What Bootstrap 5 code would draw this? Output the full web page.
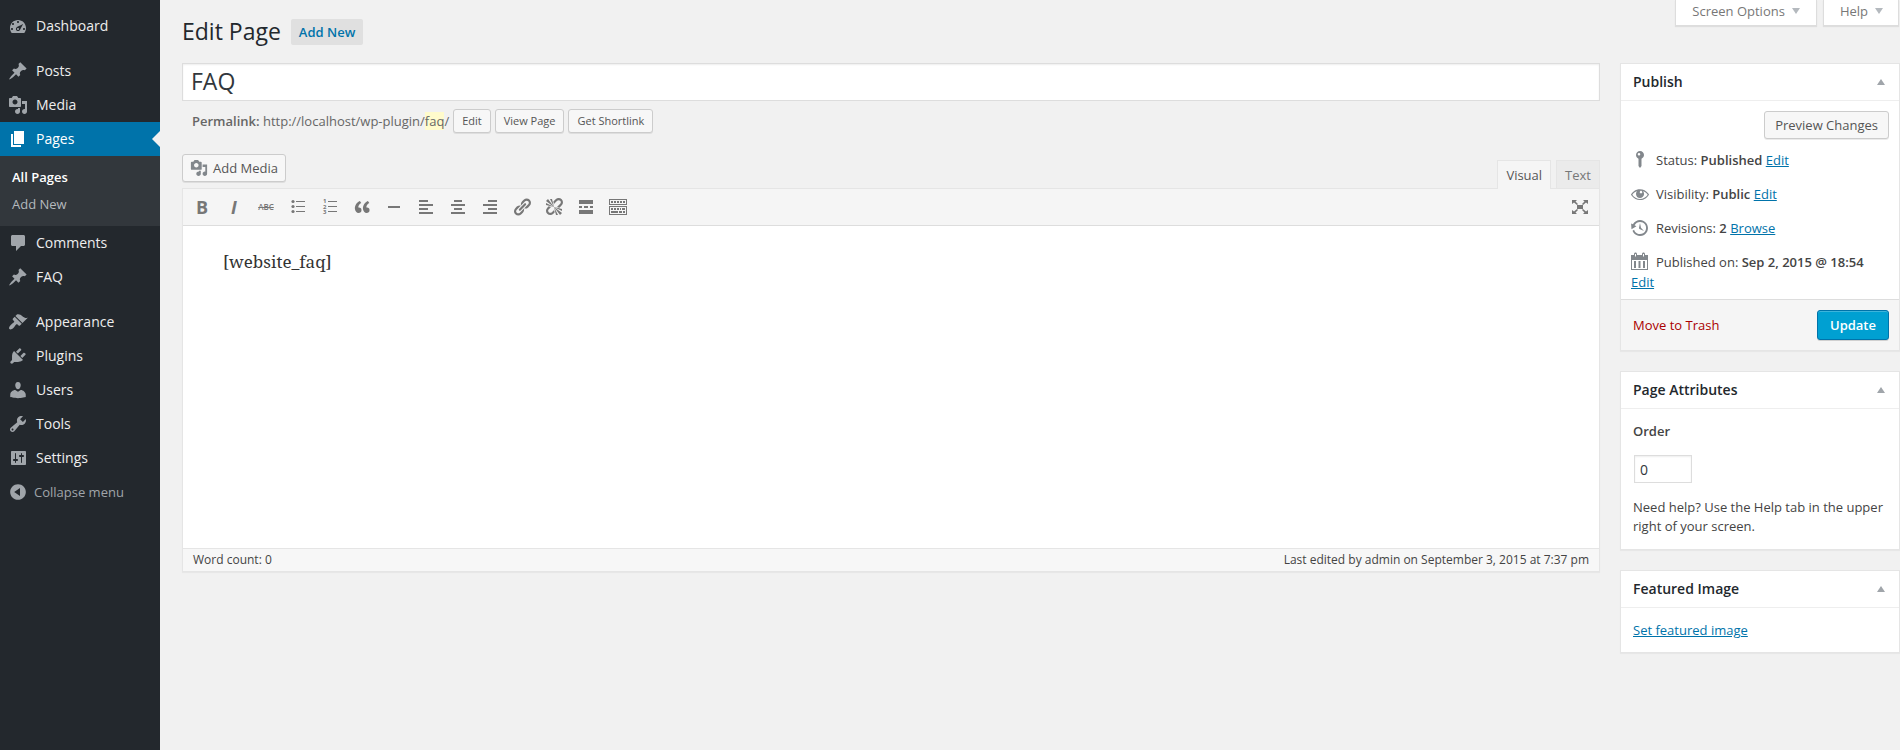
<!DOCTYPE html>
<html lang="en">
<head>
<meta charset="utf-8">
<meta name="viewport" content="width=device-width, initial-scale=1">
<title>Edit Page</title>
<link rel="stylesheet" href="https://cdn.jsdelivr.net/npm/bootstrap@5.3.0/dist/css/bootstrap.min.css">
<style>
  body { background: #f1f1f1; color: #444; font: 13px/18px "Open Sans", sans-serif; }
  svg { display: block; flex: none; fill: currentColor; }
  a { color: #0073aa; }
  strong { font-weight: 600; }

  /* admin menu */
  .admin-menu { width: 160px; background: #23282d; padding-top: 9px; flex: none; }
  .menu-link { height: 34px; padding-left: 8px; gap: 8px; color: #eee; font-size: 14px; text-decoration: none; position: relative; }
  .menu-link svg { color: #a0a5aa; }
  .menu-link.current { background: #0073aa; color: #fff; }
  .menu-link.current svg { color: #fff; }
  .menu-link.current::after { content: ""; position: absolute; right: 0; top: 9px; border: 8px solid transparent; border-right-color: #f1f1f1; border-left: 0; }
  .menu-gap { margin-top: 11px; }
  .submenu { background: #32373c; padding: 8px 0; }
  .submenu a { display: block; height: 27px; line-height: 27px; padding-left: 12px; color: #b4b9be; text-decoration: none; }
  .submenu a.current { color: #fff; font-weight: 600; }
  .collapse-btn { height: 34px; padding: 0 0 0 8px; gap: 6px; border: 0; background: none; color: #a0a5aa; }

  /* page */
  .content-area { padding-left: 22px; min-width: 0; }
  .top-bar { height: 63px; }
  h1 { font-size: 23px; line-height: 30px; font-weight: 400; color: #23282d; margin: 16px 0 0; }
  .add-new { margin: 19px 0 0 10px; height: 26px; line-height: 26px; padding: 0 8px; background: #e0e0e0; border-radius: 2px; font-weight: 600; text-decoration: none; }
  .screen-tabs { gap: 6px; padding-right: 1px; }
  .screen-tab { height: 26px; background: #fff; border: 1px solid #ddd; border-top: 0; box-shadow: 0 1px 1px rgba(0,0,0,.08); color: #777; padding: 0 16px 3px; gap: 7px; }
  .screen-tab.help-tab { padding-right: 15px; }
  .tri-down { border: 4px solid transparent; border-top: 6px solid #b4b9be; border-bottom: 0; }
  .tri-up { border: 4px solid transparent; border-bottom: 6px solid #a0a5aa; border-top: 0; }
  .columns { gap: 20px; }
  .main-col { min-width: 0; }
  .side-col { width: 280px; flex: none; }

  .title-input { display: block; width: 100%; height: 38px; border: 1px solid #ddd; background: #fff; box-shadow: inset 0 1px 2px rgba(0,0,0,.07); padding: 0 8px 2px; font-size: 23px; color: #32373c; }
  .permalink { color: #666; padding: 8px 0 21px 10px; gap: 4px; }
  .slug { background: #fffbcc; }
  .wp-btn { height: 28px; padding: 0 10px; background: #f7f7f7; border: 1px solid #ccc; border-radius: 3px; box-shadow: 0 1px 0 rgba(0,0,0,.08); color: #555; font-size: 13px; }
  .wp-btn.small-btn { height: 24px; padding: 0 8px; font-size: 11px; line-height: 20px; }
  .wp-btn.media-btn { padding: 0 7px; gap: 5px; }
  .media-btn svg { color: #82878c; }

  /* editor */
  .ed-tabs { gap: 5px; padding-top: 6px; }
  .ed-tab { height: 28px; border: 1px solid #e5e5e5; border-bottom: 0; background: #ebebeb; color: #777; padding: 0 8px; }
  .ed-tab.active { height: 29px; margin-bottom: -1px; background: #f5f5f5; color: #555; position: relative; }
  .editor { border: 1px solid #e5e5e5; box-shadow: 0 1px 1px rgba(0,0,0,.04); background: #fff; }
  .toolbar { height: 37px; background: #f5f5f5; border-bottom: 1px solid #ddd; padding: 0 5px; gap: 4px; }
  .tool { width: 28px; height: 28px; border: 0; background: none; padding: 0; color: #777; display: flex; align-items: center; justify-content: center; }
  .tool-text { font-size: 18px; font-weight: 700; line-height: 20px; }
  .tool-strike { font-size: 8px; font-weight: 600; text-decoration: line-through; }
  .ed-body { display: block; width: 100%; height: 322px; border: 0; resize: none; padding: 24px 40px; font: 17px/24px "Noto Serif", "Droid Serif", "DejaVu Serif", serif; color: #333; }
  .status-bar { height: 23px; background: #f7f7f7; border-top: 1px solid #e5e5e5; padding: 0 10px; font-size: 12px; }

  /* side boxes */
  .side-box { background: #fff; border: 1px solid #e5e5e5; box-shadow: 0 1px 1px rgba(0,0,0,.04); margin-bottom: 20px; }
  .side-head { height: 37px; border-bottom: 1px solid #eee; padding: 0 14px 0 12px; }
  .side-head h2 { font-size: 14px; line-height: 20px; font-weight: 600; color: #23282d; margin: 0; }
  .side-body { padding: 13px 12px; }
  .toggle-btn { border: 0; background: none; padding: 0; }
  .preview-row { padding: 10px 10px 4px; }
  .misc { line-height: 20px; padding: 7px 10px; }
  .misc svg { display: inline-block; vertical-align: top; color: #82878c; margin: 0 6px 0 -1px; }
  .box-foot { background: #f5f5f5; border-top: 1px solid #ddd; padding: 10px 10px 10px 12px; }
  .trash { color: #a00; text-decoration: none; }
  .update-btn { height: 30px; padding: 0 12px; background: #00a0d2; border: 1px solid #0073aa; border-radius: 3px; box-shadow: inset 0 1px 0 rgba(120,200,230,.5), 0 1px 0 rgba(0,0,0,.15); color: #fff; font-weight: 600; }
  .order-input { display: block; width: 58px; height: 28px; margin: 15px 1px; border: 1px solid #ddd; box-shadow: inset 0 1px 2px rgba(0,0,0,.07); padding: 0 5px; font-size: 14px; color: #32373c; }
  .help-text { line-height: 19px; margin: 0; }
</style>
</head>
<body>
<div class="d-flex min-vh-100">

  <nav class="admin-menu" aria-label="Main menu">
    <a class="menu-link d-flex align-items-center" href="#"><svg width="20" height="20" viewBox="0 0 20 20"><path fill-rule="evenodd" d="M3.76 17h12.48C17.34 15.63 18 13.89 18 12c0-4.41-3.58-8-8-8s-8 3.59-8 8c0 1.89.66 3.63 1.76 5zM9 6c0-.55.45-1 1-1s1 .45 1 1c0 .56-.45 1-1 1s-1-.44-1-1zM4 8c0-.55.45-1 1-1s1 .45 1 1c0 .56-.45 1-1 1s-1-.44-1-1zm4.52 3.4c.84-.83 6.51-3.5 6.51-3.5s-2.66 5.68-3.49 6.51c-.84.84-2.18.84-3.02 0-.83-.83-.83-2.18 0-3.01zM3 13c0-.55.45-1 1-1s1 .45 1 1c0 .56-.45 1-1 1s-1-.44-1-1zm6 0c0 .55.45 1 1 1s1-.45 1-1c0-.56-.45-1-1-1s-1 .44-1 1zm6 0c0-.55.45-1 1-1s1 .45 1 1c0 .56-.45 1-1 1s-1-.44-1-1z"/></svg>Dashboard</a>
    <a class="menu-link menu-gap d-flex align-items-center" href="#"><svg width="20" height="20" viewBox="0 0 20 20"><path d="M10.44 3.02l1.82-1.82 6.36 6.35-1.83 1.82c-1.05-.68-2.48-.57-3.41.36l-.75.75c-.92.93-1.04 2.35-.35 3.41l-1.83 1.82-2.41-2.41-2.8 2.79c-.42.42-3.38 2.71-3.8 2.29s1.86-3.39 2.28-3.81l2.79-2.79L4.1 9.36l1.83-1.82c1.05.69 2.48.57 3.4-.36l.75-.75c.93-.92 1.05-2.35.36-3.41z"/></svg>Posts</a>
    <a class="menu-link d-flex align-items-center" href="#"><svg width="20" height="20" viewBox="0 0 20 20"><path d="M13 11V4c0-.55-.45-1-1-1h-1.67L9 1H5L3.67 3H2c-.55 0-1 .45-1 1v7c0 .55.45 1 1 1h10c.55 0 1-.45 1-1zM7 4.5c1.38 0 2.5 1.12 2.5 2.5S8.38 9.5 7 9.5 4.5 8.38 4.5 7 5.62 4.5 7 4.5zM14 6h5v10.5c0 1.38-1.12 2.5-2.5 2.5S14 17.88 14 16.5s1.12-2.5 2.5-2.5c.17 0 .34.02.5.05V9h-3V6zm-4 8.05V13h2v3.5c0 1.38-1.12 2.5-2.5 2.5S7 17.88 7 16.5 8.12 14 9.5 14c.17 0 .34.02.5.05z" fill-rule="evenodd"/></svg>Media</a>
    <a class="menu-link current d-flex align-items-center" href="#" aria-current="page"><svg width="20" height="20" viewBox="0 0 20 20"><path d="M6 15V2h10v13H6zm-1 1h8v2H3V5h2v11z"/></svg>Pages</a>
    <div class="submenu">
      <a class="current" href="#">All Pages</a>
      <a href="#">Add New</a>
    </div>
    <a class="menu-link d-flex align-items-center" href="#"><svg width="20" height="20" viewBox="0 0 20 20"><path d="M4.500 2h11c.8 0 1.500.7 1.500 1.500v8c0 .8-.7 1.500-1.500 1.500H13l-5 5v-5H4.500C3.700 13 3 12.300 3 11.500v-8C3 2.700 3.700 2 4.500 2z"/></svg>Comments</a>
    <a class="menu-link d-flex align-items-center" href="#"><svg width="20" height="20" viewBox="0 0 20 20"><path d="M10.44 3.02l1.82-1.82 6.36 6.35-1.83 1.82c-1.05-.68-2.48-.57-3.41.36l-.75.75c-.92.93-1.04 2.35-.35 3.41l-1.83 1.82-2.41-2.41-2.8 2.79c-.42.42-3.38 2.71-3.8 2.29s1.86-3.39 2.28-3.81l2.79-2.79L4.1 9.36l1.83-1.82c1.05.69 2.48.57 3.4-.36l.75-.75c.93-.92 1.05-2.35.36-3.41z"/></svg>FAQ</a>
    <a class="menu-link menu-gap d-flex align-items-center" href="#"><svg width="20" height="20" viewBox="0 0 20 20"><path d="M14.48 11.06L7.41 3.99l1.5-1.5c.5-.56 2.3-.47 3.51.32 1.21.8 1.43 1.28 2.91 2.1 1.18.64 2.45 1.26 4.45.85zm-.71.71L6.7 4.7 4.93 6.47c-.39.39-.39 1.02 0 1.41l1.06 1.06c.39.39.39 1.03 0 1.42-.6.6-1.43 1.11-2.21 1.69-.35.26-.7.53-1.01.84C1.43 14.23.4 16.08 1.4 17.07c.99 1 2.84-.03 4.18-1.36.31-.31.58-.66.85-1.02.57-.78 1.08-1.61 1.69-2.21.39-.39 1.02-.39 1.41 0l1.06 1.06c.39.39 1.02.39 1.41 0z"/></svg>Appearance</a>
    <a class="menu-link d-flex align-items-center" href="#"><svg width="20" height="20" viewBox="0 0 20 20"><path d="M13.11 4.36L9.87 7.6 8 5.73l3.24-3.24c.35-.34 1.05-.2 1.56.32.52.51.66 1.21.31 1.55zm-8 1.77l.91-1.12 9.01 9.01-1.19.84c-.71.71-2.63 1.16-3.82 1.16H6.14L4.9 17.26c-.59.59-1.54.59-2.12 0-.59-.58-.59-1.53 0-2.12l1.24-1.24v-3.88c0-1.13.4-3.19 1.09-3.89zm7.26 3.97l3.24-3.24c.34-.35 1.04-.21 1.55.31.52.51.66 1.21.31 1.55l-3.24 3.25z"/></svg>Plugins</a>
    <a class="menu-link d-flex align-items-center" href="#"><svg width="20" height="20" viewBox="0 0 20 20"><path d="M10 9.25c-2.27 0-2.73-3.44-2.73-3.44C7 4.02 7.82 2 9.97 2c2.16 0 2.98 2.02 2.71 3.81 0 0-.41 3.44-2.68 3.44zm0 2.57L12.72 10c2.39 0 5.02 2.33 5.02 4.53v2.49s-4.15 1.13-7.74 1.13c-3.65 0-7.74-1.13-7.74-1.13v-2.49c0-2.25 2.44-4.48 4.97-4.48z"/></svg>Users</a>
    <a class="menu-link d-flex align-items-center" href="#"><svg width="20" height="20" viewBox="0 0 20 20"><path fill-rule="evenodd" d="M16.68 9.77c-1.34 1.34-3.3 1.67-4.95.99l-5.41 6.52c-.99.99-2.59.99-3.58 0s-.99-2.59 0-3.57l6.52-5.42c-.68-1.65-.35-3.61.99-4.95 1.28-1.28 3.12-1.62 4.72-1.06l-2.89 2.89 2.82 2.82 2.86-2.87c.53 1.58.18 3.39-1.08 4.65zM3.81 16.21c.4.39 1.04.39 1.43 0 .4-.4.4-1.04 0-1.43-.39-.4-1.03-.4-1.43 0-.39.39-.39 1.03 0 1.43z"/></svg>Tools</a>
    <a class="menu-link d-flex align-items-center" href="#"><svg width="20" height="20" viewBox="0 0 20 20"><path fill-rule="evenodd" d="M18 16V4c0-.55-.45-1-1-1H4c-.55 0-1 .45-1 1v12c0 .55.45 1 1 1h13c.55 0 1-.45 1-1zM8 11h1c.55 0 1 .45 1 1s-.45 1-1 1H8v1.5c0 .28-.22.5-.5.5s-.5-.22-.5-.5V13H6c-.55 0-1-.45-1-1s.45-1 1-1h1V5.500c0-.28.22-.5.5-.5s.5.22.5.5V11zm5-2h-1c-.55 0-1-.45-1-1s.45-1 1-1h1V5.500c0-.28.22-.5.5-.5s.5.22.5.5V7h1c.55 0 1 .45 1 1s-.45 1-1 1h-1v5.500c0 .28-.22.5-.5.5s-.5-.22-.5-.5V9z"/></svg>Settings</a>
    <button type="button" class="collapse-btn d-flex align-items-center"><svg width="20" height="20" viewBox="0 0 20 20"><path fill-rule="evenodd" d="M10 2.160c4.330 0 7.840 3.510 7.840 7.840s-3.510 7.840-7.840 7.840S2.160 14.330 2.160 10 5.710 2.160 10 2.160zm2 11.720V6.120L6.180 9.970z"/></svg>Collapse menu</button>
  </nav>

  <main class="content-area flex-grow-1">
    <header class="top-bar d-flex align-items-start">
      <h1>Edit Page</h1>
      <a class="add-new" href="#">Add New</a>
      <div class="screen-tabs d-flex ms-auto">
        <button type="button" class="screen-tab d-flex align-items-center">Screen Options <span class="tri-down"></span></button>
        <button type="button" class="screen-tab help-tab d-flex align-items-center">Help <span class="tri-down"></span></button>
      </div>
    </header>

    <div class="columns d-flex align-items-start">
      <section class="main-col flex-grow-1">
        <input class="title-input" type="text" value="FAQ" aria-label="Page title">
        <div class="permalink d-flex align-items-center">
          <span><strong>Permalink:</strong> http://localhost/wp-plugin/<span class="slug">faq</span>/</span>
          <button type="button" class="wp-btn small-btn">Edit</button>
          <button type="button" class="wp-btn small-btn">View Page</button>
          <button type="button" class="wp-btn small-btn">Get Shortlink</button>
        </div>

        <div class="d-flex align-items-end justify-content-between">
          <button type="button" class="wp-btn media-btn d-flex align-items-center mb-auto"><svg width="18" height="18" viewBox="0 0 20 20"><path fill-rule="evenodd" d="M13 11V4c0-.55-.45-1-1-1h-1.670L9 1H5L3.670 3H2c-.55 0-1 .45-1 1v7c0 .55.45 1 1 1h10c.55 0 1-.45 1-1zM7 4.500c1.380 0 2.500 1.120 2.500 2.500S8.380 9.500 7 9.500 4.500 8.380 4.500 7 5.620 4.500 7 4.500zM14 6h5v10.500c0 1.380-1.120 2.500-2.500 2.500S14 17.880 14 16.500s1.120-2.500 2.500-2.500c.17 0 .34.02.5.05V9h-3V6zm-4 8.050V13h2v3.500c0 1.380-1.120 2.500-2.500 2.500S7 17.880 7 16.500 8.120 14 9.500 14c.17 0 .34.02.5.05z"/></svg>Add Media</button>
          <div class="ed-tabs d-flex align-items-end">
            <button type="button" class="ed-tab active">Visual</button>
            <button type="button" class="ed-tab">Text</button>
          </div>
        </div>

        <div class="editor">
          <div class="toolbar d-flex align-items-center">
            <button type="button" class="tool tool-text" aria-label="Bold">B</button>
            <button type="button" class="tool tool-text fst-italic" aria-label="Italic">I</button>
            <button type="button" class="tool tool-strike" aria-label="Strikethrough">ABC</button>
            <button type="button" class="tool" aria-label="Bulleted list"><svg width="20" height="20" viewBox="0 0 20 20"><path d="M8 4h9v1H8zM8 9h9v1H8zM8 14h9v1H8z"/><circle cx="5" cy="4.500" r="1.600"/><circle cx="5" cy="9.500" r="1.600"/><circle cx="5" cy="14.500" r="1.600"/></svg></button>
            <button type="button" class="tool" aria-label="Numbered list"><svg width="20" height="20" viewBox="0 0 20 20"><path d="M8 4h9v1H8zM8 9h9v1H8zM8 14h9v1H8z"/><g font-family="Open Sans, sans-serif" font-size="6" font-weight="700"><text x="3" y="6">1</text><text x="3" y="12">2</text><text x="3" y="17">3</text></g></svg></button>
            <button type="button" class="tool" aria-label="Blockquote"><svg width="20" height="20" viewBox="0 0 20 20"><path d="M9.490 13.220c0-.74-.2-1.380-.61-1.900-.62-.78-1.830-.88-2.530-.72-.29-1.650 1.110-3.750 2.920-4.650L7.880 4c-2.730 1.300-5.420 4.280-4.960 8.050C3.210 14.430 4.590 16 6.540 16c.85 0 1.560-.25 2.120-.75s.83-1.180.83-2.030zm8.050 0c0-.74-.2-1.380-.61-1.900-.63-.78-1.830-.88-2.530-.72-.29-1.650 1.110-3.750 2.920-4.650L15.930 4c-2.730 1.300-5.410 4.280-4.950 8.050.29 2.380 1.660 3.950 3.610 3.950.85 0 1.560-.25 2.120-.75s.83-1.180.83-2.030z"/></svg></button>
            <button type="button" class="tool" aria-label="Horizontal line"><svg width="20" height="20" viewBox="0 0 20 20"><path d="M4 9h12v2H4z"/></svg></button>
            <button type="button" class="tool" aria-label="Align left"><svg width="20" height="20" viewBox="0 0 20 20"><path d="M3 3h9v2H3zM3 7h14v2H3zM3 11h9v2H3zM3 15h14v2H3z"/></svg></button>
            <button type="button" class="tool" aria-label="Align center"><svg width="20" height="20" viewBox="0 0 20 20"><path d="M6 3h8v2H6zM3 7h14v2H3zM6 11h8v2H6zM3 15h14v2H3z"/></svg></button>
            <button type="button" class="tool" aria-label="Align right"><svg width="20" height="20" viewBox="0 0 20 20"><path d="M8 3h9v2H8zM3 7h14v2H3zM8 11h9v2H8zM3 15h14v2H3z"/></svg></button>
            <button type="button" class="tool" aria-label="Insert link"><svg width="20" height="20" viewBox="0 0 20 20"><path fill-rule="evenodd" d="M17.740 2.760c1.680 1.690 1.680 4.410 0 6.100l-1.530 1.520c-1.120 1.120-2.700 1.470-4.140 1.090l2.620-2.610.76-.77.76-.76c.84-.84.84-2.200 0-3.040-.84-.85-2.200-.85-3.040 0l-.77.76-3.380 3.380c-.37-1.440-.02-3.020 1.100-4.140l1.520-1.530c1.690-1.680 4.420-1.680 6.100 0zM8.590 13.430l5.340-5.340c.42-.42.42-1.100 0-1.520-.44-.43-1.130-.39-1.530 0l-5.330 5.340c-.42.42-.42 1.100 0 1.520.44.43 1.130.39 1.520 0zm-.76 2.290l4.140-4.150c.38 1.440.03 3.020-1.090 4.140l-1.520 1.530c-1.690 1.680-4.410 1.680-6.100 0-1.680-1.680-1.680-4.420 0-6.100l1.530-1.520c1.120-1.120 2.700-1.470 4.140-1.100l-4.140 4.150c-.85.84-.85 2.200 0 3.050.84.84 2.200.84 3.040 0z"/></svg></button>
            <button type="button" class="tool" aria-label="Remove link"><svg width="20" height="20" viewBox="0 0 20 20"><path d="M17.740 2.260c1.680 1.690 1.680 4.410 0 6.100l-1.530 1.520c-.32.33-.69.58-1.080.77L13 10l1.690-1.640.76-.77.76-.76c.84-.84.84-2.200 0-3.040-.84-.85-2.200-.85-3.040 0l-.77.76-.76.76L10 7l-.65-2.140c.19-.38.44-.75.77-1.070l1.520-1.530c1.690-1.680 4.420-1.680 6.100 0zM2 4l8 6-6-8zm4-2l4 8-2-8H6zM2 6l8 4-8-2V6zm7.360 7.690L10 13l.74 2.350-1.380 1.390c-1.690 1.680-4.410 1.680-6.100 0-1.680-1.680-1.680-4.420 0-6.100l1.390-1.380L7 10l-.69.64-1.520 1.530c-.85.84-.85 2.200 0 3.040.84.85 2.200.85 3.040 0zM18 16l-8-6 6 8zm-4 2l-4-8 2 8h2zm4-4l-8-4 8 2v2z"/></svg></button>
            <button type="button" class="tool" aria-label="Read more"><svg width="20" height="20" viewBox="0 0 20 20"><path d="M3 3h14v4H3zM3 9h3v2H3zM8 9h4v2H8zM14 9h3v2h-3zM3 13h14v4H3z"/></svg></button>
            <button type="button" class="tool" aria-label="Toolbar toggle"><svg width="20" height="20" viewBox="0 0 20 20"><path fill-rule="evenodd" d="M1 2h18v6H1zM2 3v4h16V3zM1 9h18v9H1zM2 10v7h16v-7z"/><path d="M3 4h2v2H3zM6 4h2v2H6zM9 4h2v2H9zM12 4h2v2h-2zM15 4h2v2h-2zM3 11h2v2H3zM6 11h2v2H6zM9 11h2v2H9zM12 11h1v2h-1zM14 11h3v2h-3zM3 14h7v2H3zM11 14h3v2h-3zM15 14h2v2h-2z"/></svg></button>
            <button type="button" class="tool ms-auto" aria-label="Distraction-free writing"><svg width="20" height="20" viewBox="0 0 20 20"><path d="M7 8h6v4H7zM2 3h5L5.500 4.500 8 7 7 8 4 5.500 2 7zM18 3h-5l1.500 1.500L12 7l1 1 3-2.500L18 7zM2 17h5l-1.500-1.500L8 13l-1-1-3 2.500L2 13zM18 17h-5l1.500-1.500L12 13l1-1 3 2.500 2-1.500z"/></svg></button>
          </div>
          <textarea class="ed-body" aria-label="Page content">[website_faq]</textarea>
          <div class="status-bar d-flex align-items-center justify-content-between">
            <span>Word count: 0</span>
            <span>Last edited by admin on September 3, 2015 at 7:37 pm</span>
          </div>
        </div>
      </section>

      <aside class="side-col">
        <section class="side-box">
          <div class="side-head d-flex align-items-center justify-content-between"><h2>Publish</h2><button type="button" class="toggle-btn" aria-label="Toggle Publish"><span class="tri-up d-block"></span></button></div>
          <div class="preview-row d-flex justify-content-end"><button type="button" class="wp-btn">Preview Changes</button></div>
          <div class="misc"><svg width="20" height="20" viewBox="0 0 20 20"><path fill-rule="evenodd" d="M10 1c2.300 0 4 1.800 4 4 0 1.800-1.100 3.100-2.500 3.700V16L10 18 8.500 16V8.700C7.100 8.100 6 6.800 6 5c0-2.200 1.700-4 4-4zM9 3a1.300 1.300 0 1 0 0 2.600A1.300 1.300 0 0 0 9 3z"/></svg>Status: <strong>Published</strong> <a href="#">Edit</a></div>
          <div class="misc"><svg width="20" height="20" viewBox="0 0 20 20"><path d="M18.300 9.500C15 4.900 8.500 3.800 3.900 7.200c-1.200.9-2.200 2.100-3 3.400.2.400.5.800.8 1.200 3.300 4.600 9.600 5.600 14.200 2.400.9-.7 1.700-1.400 2.400-2.400.3-.4.5-.8.8-1.200-.3-.4-.5-.8-.8-1.100zm-8.200-2.300c.5-.5 1.300-.5 1.800 0s.5 1.300 0 1.800-1.300.5-1.800 0-.5-1.300 0-1.800zm-.1 7.700c-3.100 0-6-1.600-7.700-4.200C3.500 9 5.100 7.800 7 7.200c-.7.8-1 1.700-1 2.700 0 2.200 1.700 4.100 4 4.100 2.200 0 4.100-1.700 4.100-4v-.1c0-1-.4-2-1.100-2.700 1.900.6 3.500 1.800 4.700 3.500-1.700 2.600-4.600 4.200-7.700 4.200z"/></svg>Visibility: <strong>Public</strong> <a href="#">Edit</a></div>
          <div class="misc"><svg width="20" height="20" viewBox="0 0 20 20"><path d="M13.650 2.880c3.930 2.010 5.480 6.840 3.470 10.770s-6.830 5.480-10.770 3.470c-1.870-.96-3.200-2.560-3.860-4.400l1.640-1.030c.45 1.570 1.520 2.950 3.080 3.760 3.010 1.540 6.690.35 8.230-2.660 1.550-3.010.36-6.690-2.650-8.240C9.780 3.010 6.100 4.200 4.560 7.210l1.880.97-4.950 3.080-.39-5.820 1.780.91C4.900 2.400 9.750.89 13.650 2.880zm-4.360 7.830C9.110 10.530 9 10.280 9 10c0-.07.03-.12.04-.19h-.01L10 5l.97 4.810L14 13l-4.500-2.120.02-.02c-.08-.04-.16-.09-.23-.15z"/></svg>Revisions: <strong>2</strong> <a href="#">Browse</a></div>
          <div class="misc"><svg width="20" height="20" viewBox="0 0 20 20"><path fill-rule="evenodd" d="M15 3h3v15H1V3h3V2c0-.8.700-1.500 1.500-1.500S7 1.200 7 2v1h5V2c0-.8.700-1.500 1.500-1.500S15 1.200 15 2zM5 2v2.500h1V2zM13 2v2.500h1V2zM17 17V8H2v9zM6 16V9H4v7zM10.500 16V9h-2v7zM15 16V9h-2v7z"/></svg>Published on: <strong>Sep 2, 2015 @ 18:54</strong> <a href="#">Edit</a></div>
          <div class="box-foot d-flex align-items-center justify-content-between"><a class="trash" href="#">Move to Trash</a><button type="submit" class="update-btn">Update</button></div>
        </section>

        <section class="side-box">
          <div class="side-head d-flex align-items-center justify-content-between"><h2>Page Attributes</h2><button type="button" class="toggle-btn" aria-label="Toggle Page Attributes"><span class="tri-up d-block"></span></button></div>
          <div class="side-body">
            <label for="order" class="fw-semibold d-block">Order</label>
            <input class="order-input" id="order" type="text" value="0">
            <p class="help-text">Need help? Use the Help tab in the upper right of your screen.</p>
          </div>
        </section>

        <section class="side-box">
          <div class="side-head d-flex align-items-center justify-content-between"><h2>Featured Image</h2><button type="button" class="toggle-btn" aria-label="Toggle Featured Image"><span class="tri-up d-block"></span></button></div>
          <div class="side-body"><a href="#">Set featured image</a></div>
        </section>
      </aside>
    </div>
  </main>
</div>
<script src="https://cdn.jsdelivr.net/npm/bootstrap@5.3.0/dist/js/bootstrap.bundle.min.js"></script>
</body>
</html>
